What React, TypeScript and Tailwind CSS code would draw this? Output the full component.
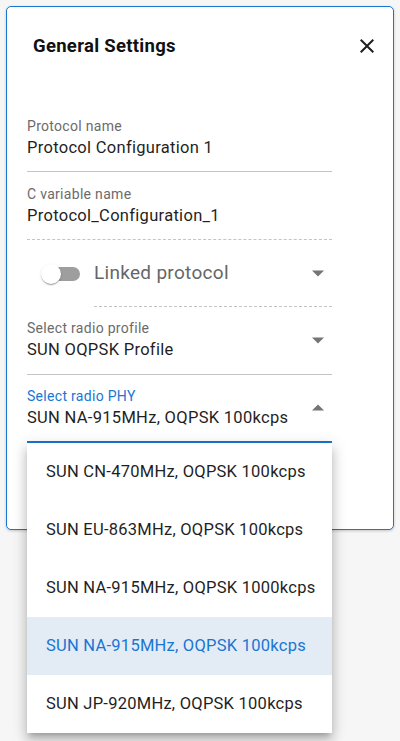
import { useState } from "react";

const phyOptions = [
  "SUN CN-470MHz, OQPSK 100kcps",
  "SUN EU-863MHz, OQPSK 100kcps",
  "SUN NA-915MHz, OQPSK 1000kcps",
  "SUN NA-915MHz, OQPSK 100kcps",
  "SUN JP-920MHz, OQPSK 100kcps",
];

function Caret({ up = false }: { up?: boolean }) {
  return (
    <svg viewBox="0 0 24 24" className="w-6 h-6 shrink-0 fill-[#757575]">
      {up ? <path d="M6 14.5l6-6 6 6z" /> : <path d="M6 9.5l6 6 6-6z" />}
    </svg>
  );
}

function CloseIcon() {
  return (
    <svg viewBox="0 0 24 24" className="w-6 h-6 fill-[#1f1f1f]">
      <path d="M19 6.41 17.59 5 12 10.59 6.41 5 5 6.41 10.59 12 5 17.59 6.41 19 12 13.41 17.59 19 19 17.59 13.41 12z" />
    </svg>
  );
}

function TextField({ label, value, dashed = false }: { label: string; value: string; dashed?: boolean }) {
  return (
    <div
      className={`flex flex-col pb-[11px] border-b ${
        dashed ? "border-dashed border-[#c4c4c4]" : "border-[#c4c4c4]"
      }`}
    >
      <span className="text-[14px] leading-[20px] tracking-[0.3px] text-[#6b6b6b]">{label}</span>
      <span className="text-[16.5px] leading-[24px] tracking-[0.3px] text-[#1f1f1f]">{value}</span>
    </div>
  );
}

export default function App() {
  const [selected] = useState(3);

  return (
    <div className="min-h-screen bg-[#f6f6f6] p-[6px] font-['Roboto',sans-serif]">
      <div className="w-[388px] bg-white border border-[#1976d2] rounded-[5px] shadow-[0_1px_3px_rgba(0,0,0,0.2)] pb-[86px]">
        {/* Header */}
        <div className="flex items-center justify-between pt-[27px] pl-[26px] pr-[14px]">
          <h2 className="text-[18.5px] leading-[24px] tracking-[0.3px] font-bold text-[#111]">General Settings</h2>
          <CloseIcon />
        </div>

        {/* Form */}
        <div className="flex flex-col mt-[58px] ml-[20px] w-[305px]">
          <TextField label="Protocol name" value="Protocol Configuration 1" />
          <div className="mt-[12px]">
            <TextField label="C variable name" value="Protocol_Configuration_1" dashed />
          </div>

          {/* Linked protocol toggle */}
          <div className="flex items-stretch h-[67px]">
            <div className="w-[67px] flex items-center">
              <div className="relative w-[53px] h-[20px] ml-[3px]">
                <div className="absolute left-[14px] top-[3px] w-[36px] h-[14px] rounded-full bg-[#9e9e9e]" />
                <div className="absolute left-[11px] top-0 w-[20px] h-[20px] rounded-full bg-white shadow-[0_2px_1px_-1px_rgba(0,0,0,0.2),0_1px_1px_0_rgba(0,0,0,0.14),0_1px_3px_0_rgba(0,0,0,0.12)]" />
              </div>
            </div>
            <div className="flex-1 flex items-center justify-between border-b border-dashed border-[#c4c4c4] pr-[2px]">
              <span className="text-[19px] leading-[24px] tracking-[0.3px] text-[#666]">Linked protocol</span>
              <Caret />
            </div>
          </div>

          {/* Radio profile */}
          <div className="mt-[11px] flex items-center justify-between pb-[12px] border-b border-[#c4c4c4] pr-[2px]">
            <div className="flex flex-col">
              <span className="text-[14px] leading-[20px] tracking-[0.3px] text-[#6b6b6b]">Select radio profile</span>
              <span className="text-[16.5px] leading-[24px] tracking-[0.3px] text-[#1f1f1f]">SUN OQPSK Profile</span>
            </div>
            <Caret />
          </div>

          {/* Radio PHY, open */}
          <div className="relative mt-[11px]">
            <div className="flex items-center justify-between pb-[11px] border-b-2 border-[#1976d2] pr-[2px]">
              <div className="flex flex-col">
                <span className="text-[14px] leading-[20px] tracking-[0.3px] text-[#1976d2]">Select radio PHY</span>
                <span className="text-[16.5px] leading-[24px] tracking-[0.3px] text-[#1f1f1f]">{phyOptions[selected]}</span>
              </div>
              <Caret up />
            </div>

            <ul className="absolute left-0 top-full w-[305px] bg-white z-10 shadow-[0_5px_5px_-3px_rgba(0,0,0,0.2),0_8px_10px_1px_rgba(0,0,0,0.14),0_3px_14px_2px_rgba(0,0,0,0.12)]">
              {phyOptions.map((opt, i) => (
                <li
                  key={opt}
                  className={`h-[58px] flex items-center pl-[19px] text-[16.5px] tracking-[0.25px] ${
                    i === selected ? "bg-[#e3ebf5] text-[#1976d2]" : "text-[#1f1f1f]"
                  }`}
                >
                  {opt}
                </li>
              ))}
            </ul>
          </div>
        </div>
      </div>
    </div>
  );
}
